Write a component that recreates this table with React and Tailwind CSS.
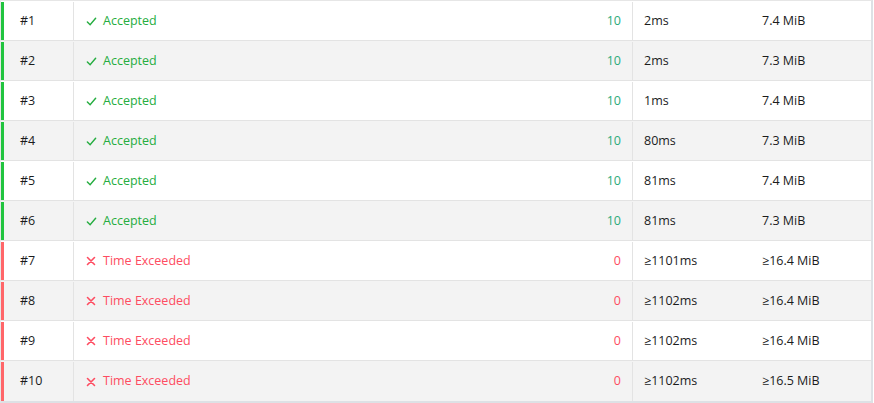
import React from "react";

const rows = [
  { id: 1, ok: true, score: 10, time: "2ms", mem: "7.4 MiB" },
  { id: 2, ok: true, score: 10, time: "2ms", mem: "7.3 MiB" },
  { id: 3, ok: true, score: 10, time: "1ms", mem: "7.4 MiB" },
  { id: 4, ok: true, score: 10, time: "80ms", mem: "7.3 MiB" },
  { id: 5, ok: true, score: 10, time: "81ms", mem: "7.4 MiB" },
  { id: 6, ok: true, score: 10, time: "81ms", mem: "7.3 MiB" },
  { id: 7, ok: false, score: 0, time: "≥1101ms", mem: "≥16.4 MiB" },
  { id: 8, ok: false, score: 0, time: "≥1102ms", mem: "≥16.4 MiB" },
  { id: 9, ok: false, score: 0, time: "≥1102ms", mem: "≥16.4 MiB" },
  { id: 10, ok: false, score: 0, time: "≥1102ms", mem: "≥16.5 MiB" },
];

const Check = () => (
  <svg width="11" height="11" viewBox="0 0 12 12" fill="none" stroke="currentColor" strokeWidth="1.6" strokeLinecap="round">
    <path d="M1.5 6.5 L4.5 9.5 L10.5 2.5" />
  </svg>
);

const Cross = () => (
  <svg width="10" height="10" viewBox="0 0 10 10" fill="none" stroke="currentColor" strokeWidth="1.6" strokeLinecap="round">
    <path d="M1.5 1.5 L8.5 8.5 M8.5 1.5 L1.5 8.5" />
  </svg>
);

const App = () => {
  return (
    <div className="w-[874px] h-[403px] bg-white font-['Open_Sans',sans-serif] text-[12.5px] text-[#1b1c1d]">
      <div className="w-[873px] border-t border-l border-[#e6e6e6] border-r-2 border-r-[#dde1e5] border-b-2 border-b-[#dde1e5]">
        {rows.map((r, i) => (
          <div
            key={r.id}
            className={`flex h-[40px] pt-[1px] items-center border-b border-[#e3e3e3] last:border-b-0 ${i % 2 === 1 ? "bg-[#f3f3f3]" : "bg-white"}`}
          >
            <div
              className={`w-[73px] h-full flex items-center pl-[16px] border-l-[3px] border-r border-r-[#e3e3e3] ${r.ok ? "border-l-[#21c43f]" : "border-l-[#ff6669]"}`}
            >
              #{r.id}
            </div>
            <div
              className={`flex-1 h-full flex items-center pl-[12px] pr-[11px] border-r border-[#e3e3e3] ${r.ok ? "text-[#25ad40]" : "text-[#fe4c61]"}`}
            >
              <span className="w-[17px] flex items-center">{r.ok ? <Check /> : <Cross />}</span>
              <span>{r.ok ? "Accepted" : "Time Exceeded"}</span>
              <span className={`ml-auto ${r.ok ? "text-[#2bab7a]" : "text-[#fe4c61]"}`}>{r.score}</span>
            </div>
            <div className="w-[119px] pl-[11px]">{r.time}</div>
            <div className="w-[119px] pl-[10px]">{r.mem}</div>
          </div>
        ))}
      </div>
    </div>
  );
};

export default App;
